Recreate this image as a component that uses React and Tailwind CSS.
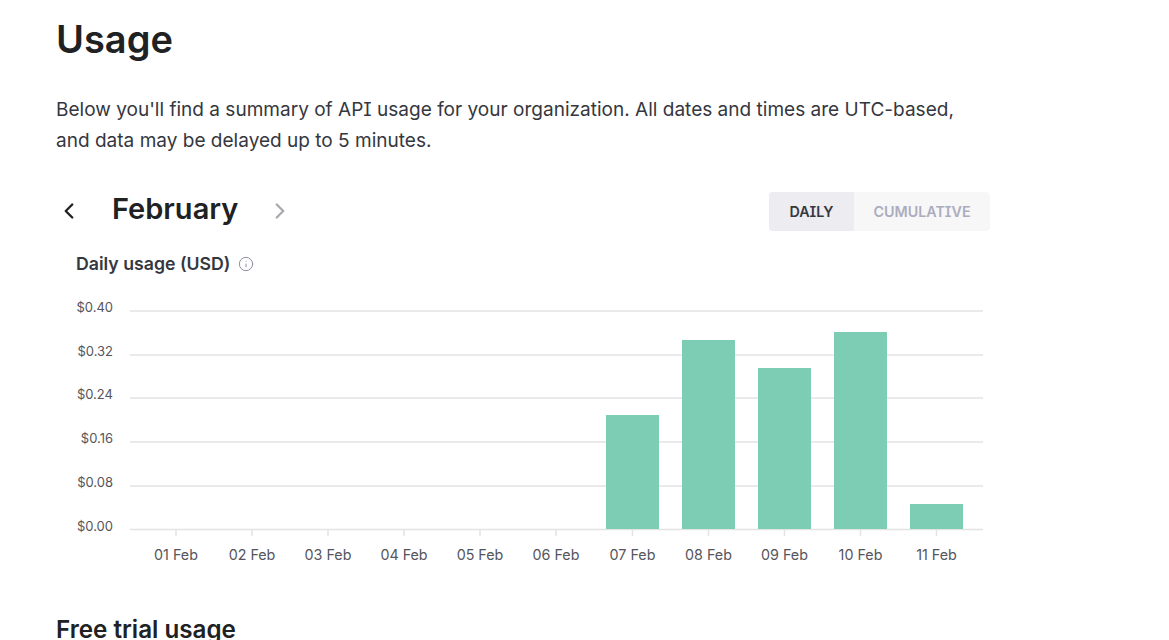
import { ChevronLeft, ChevronRight, Info } from 'lucide-react';

const yTicks = [
    { label: '$0.40', y: 311 },
    { label: '$0.32', y: 355 },
    { label: '$0.24', y: 398 },
    { label: '$0.16', y: 442 },
    { label: '$0.08', y: 486 },
    { label: '$0.00', y: 529.5 },
];

const days = [
    { label: '01 Feb', x: 176 },
    { label: '02 Feb', x: 252 },
    { label: '03 Feb', x: 328 },
    { label: '04 Feb', x: 404 },
    { label: '05 Feb', x: 480 },
    { label: '06 Feb', x: 556 },
    { label: '07 Feb', x: 632.5, top: 415 },
    { label: '08 Feb', x: 708.5, top: 340 },
    { label: '09 Feb', x: 784.5, top: 368 },
    { label: '10 Feb', x: 860.5, top: 332 },
    { label: '11 Feb', x: 936.5, top: 504 },
];

function UsageChart() {
    // chart origin sits at y 290 in the page
    return (
        <svg width="1000" height="290" viewBox="0 290 1000 290" className="block">
            {yTicks.map(t => (
                <g key={t.label}>
                    <line x1="130" x2="983" y1={t.y} y2={t.y} stroke="#e3e3e5" strokeWidth="1.5" />
                    <text x="113" y={t.y + 1.2} textAnchor="end" fontSize="13" fill="#55555c">{t.label}</text>
                </g>
            ))}
            {days.map(d => (
                <g key={d.label}>
                    {d.top && <rect x={d.x - 26.5} y={d.top} width="53" height={529 - d.top} fill="#7dcdb4" />}
                    <line x1={d.x} x2={d.x} y1="529" y2="536" stroke="#e3e3e5" strokeWidth="1.5" />
                    <text x={d.x} y="559.5" textAnchor="middle" fontSize="14.3" fill="#55555c">{d.label}</text>
                </g>
            ))}
        </svg>
    );
}

export default function App() {
    return (
        <div className="h-[640px] overflow-hidden bg-white pl-14 font-['Inter',sans-serif] text-[#202123] [font-feature-settings:'cv08']">
            <h1 className="mt-[13px] text-[38px] font-semibold leading-[52px]">Usage</h1>

            <p className="mt-[29px] w-[930px] text-[19.04px] leading-[31px] text-[#353740]">
                Below you'll find a summary of API usage for your organization. All dates and times are UTC-based, and data may be delayed up to 5 minutes.
            </p>

            <div className="mt-[36px] flex h-10 w-[934px] items-center justify-between">
                <div className="flex items-center pb-0.5">
                    <ChevronLeft size={26} strokeWidth={2.2} className="text-[#202123]" />
                    <h2 className="ml-[30px] pb-1 text-[29px] font-semibold leading-10">February</h2>
                    <ChevronRight size={26} strokeWidth={2.2} className="ml-[29px] text-[#a9a9b0]" />
                </div>
                <div className="flex h-[39px] self-start overflow-hidden rounded bg-[#f7f7f8] text-[14.3px] font-semibold leading-[39px]">
                    <span className="w-[85px] bg-[#ececf1] text-center text-[#353740]">DAILY</span>
                    <span className="w-[136px] text-center text-[#acacbe]">CUMULATIVE</span>
                </div>
            </div>

            <div className="ml-5 mt-[11px] flex h-[42px] items-center gap-2 text-[17.7px] font-semibold text-[#353740]">
                <span>Daily usage (USD)</span>
                <Info size={16} strokeWidth={1.5} className="text-[#8e8ea0]" />
            </div>

            <div className="-ml-14 mt-[5px]">
                <UsageChart />
            </div>

            <h2 className="mt-[34px] text-[24.2px] font-semibold leading-8">Free trial usage</h2>
        </div>
    );
}
